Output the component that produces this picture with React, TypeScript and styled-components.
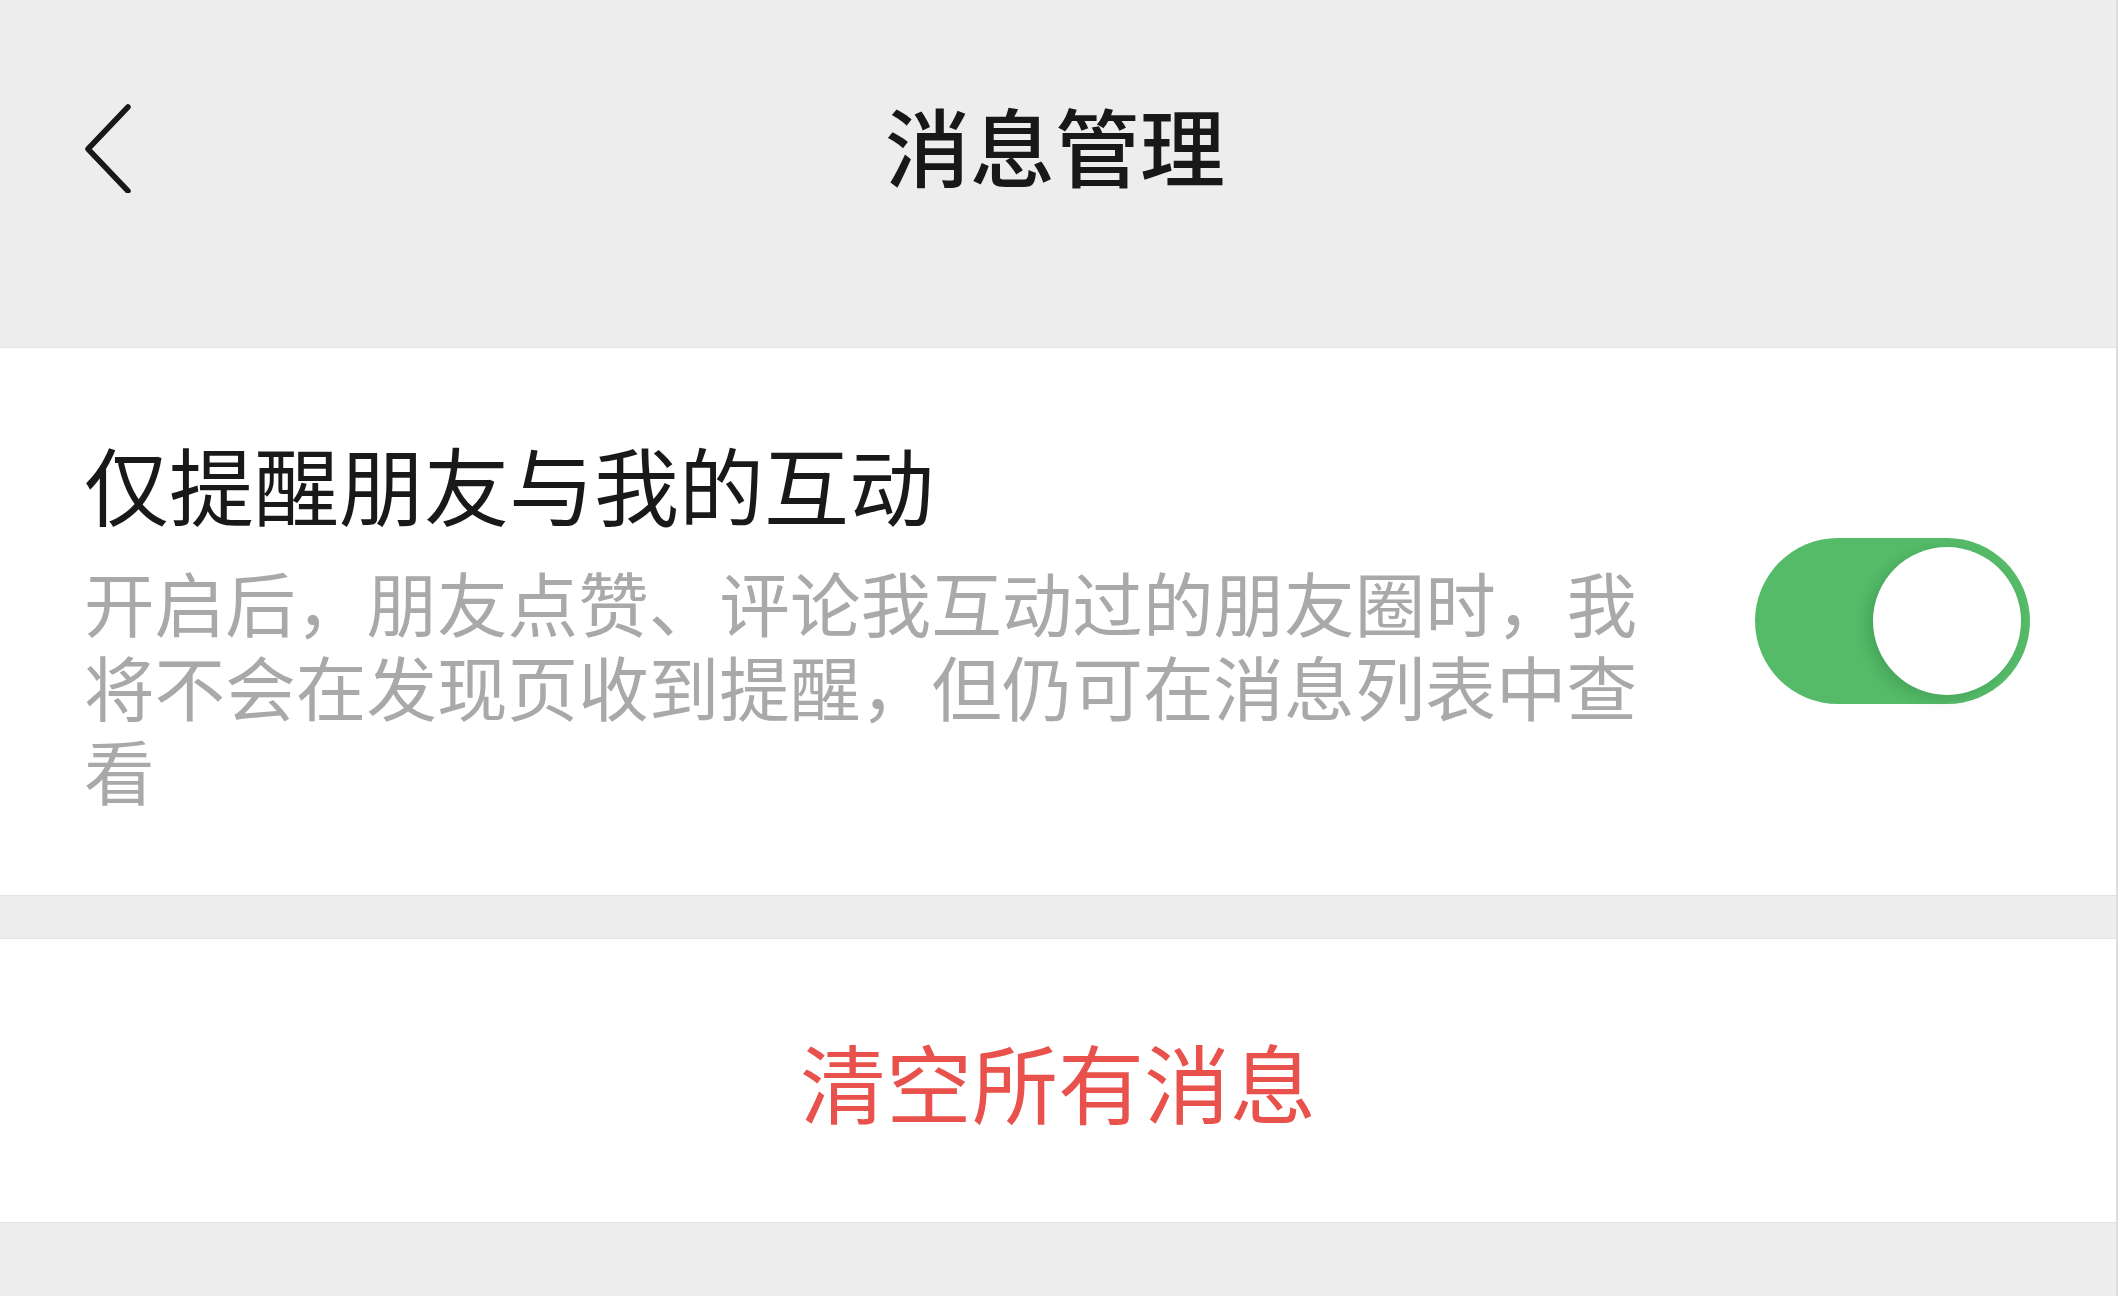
import { FC, useState } from "react";
import styled, { createGlobalStyle, css } from "styled-components";

const GlobalStyle = createGlobalStyle`
  html, body {
    margin: 0;
    padding: 0;
    background: #ededed;
  }

  body {
    font-family: "Noto Sans CJK SC", "Noto Sans", sans-serif;
  }
`;

const BackIcon: FC = () => (
	<svg width="60" height="100" viewBox="0 0 60 100" fill="none">
		<path
			d="M46 14 L6 56 L46 98"
			stroke="#181818"
			strokeWidth="5.5"
			strokeLinecap="round"
			strokeLinejoin="round"
		/>
	</svg>
);

type ToggleProps = {
	on: boolean;
	onChange: (v: boolean) => void;
};

const Toggle: FC<ToggleProps> = ({ on, onChange }) => (
	<Track on={on} onClick={() => onChange(!on)}>
		<Knob />
	</Track>
);

const App: FC = () => {
	const [onlyFriends, setOnlyFriends] = useState(true);

	return (
		<>
			<GlobalStyle />
			<Page>
				<Header>
					<NavBar>
						<BackButton>
							<BackIcon />
						</BackButton>
						<NavTitle>消息管理</NavTitle>
						<span />
					</NavBar>
				</Header>

				<Section>
					<SettingRow>
						<SettingText>
							<SettingTitle>仅提醒朋友与我的互动</SettingTitle>
							<SettingDesc>
								开启后，朋友点赞、评论我互动过的朋友圈时，我将不会在发现页收到提醒，但仍可在消息列表中查看
							</SettingDesc>
						</SettingText>
						<Toggle on={onlyFriends} onChange={setOnlyFriends} />
					</SettingRow>
				</Section>

				<Gap />

				<Section>
					<DangerButton>清空所有消息</DangerButton>
				</Section>
			</Page>
		</>
	);
};

const Page = styled.div`
  min-height: 1296px;
  background: #ededed;
  border-right: 2px solid #dedede;
  box-sizing: border-box;
`;

const Header = styled.header`
  height: 347px;
  background: #ededed;
`;

const NavBar = styled.div`
  height: 286px;
  display: grid;
  grid-template-columns: 1fr auto 1fr;
  align-items: center;
`;

const BackButton = styled.div`
  display: flex;
  align-items: center;
  width: 60px;
  height: 100px;
  margin-left: 82px;
`;

const NavTitle = styled.h1`
  margin: 0 0 0 -6px;
  font-size: 85px;
  font-weight: 500;
  color: #181818;
  line-height: 1;
`;

const Section = styled.section`
  background: #ffffff;
  border-top: 1px solid #e2e2e2;
  border-bottom: 1px solid #e2e2e2;
`;

const SettingRow = styled.div`
  display: flex;
  align-items: center;
  justify-content: space-between;
  padding: 83px 86px 84px 84px;
`;

const SettingText = styled.div`
  display: flex;
  flex-direction: column;
  gap: 25px;
  width: 1580px;
`;

const SettingTitle = styled.div`
  font-size: 85px;
  line-height: 103px;
  color: #191919;
`;

const SettingDesc = styled.div`
  font-size: 70.6px;
  line-height: 84px;
  color: #a9a9a9;
`;

const Track = styled.div<{ on: boolean }>`
  width: 275px;
  height: 166px;
  border-radius: 83px;
  padding: 9px;
  box-sizing: border-box;
  display: flex;
  align-items: center;
  background: #e5e5e5;
  cursor: pointer;

  ${(props) =>
		props.on &&
		css`
      background: #55bb69;
      justify-content: flex-end;
    `}
`;

const Knob = styled.div`
  width: 148px;
  height: 148px;
  border-radius: 50%;
  background: #ffffff;
  box-shadow: -6px 4px 14px rgba(0, 60, 20, 0.18);
`;

const Gap = styled.div`
  height: 42px;
`;

const DangerButton = styled.div`
  height: 283px;
  display: flex;
  align-items: center;
  justify-content: center;
  font-size: 86px;
  color: #e9514c;
  cursor: pointer;
`;

export default App;
